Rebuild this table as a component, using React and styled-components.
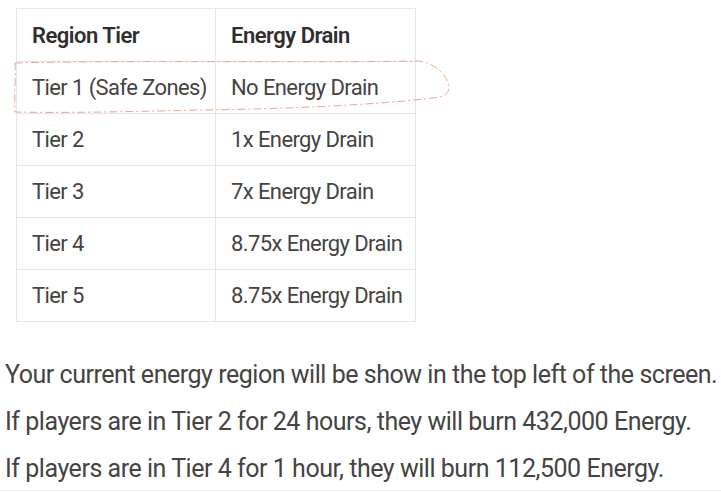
import React from "react";
import styled, { createGlobalStyle } from "styled-components";

const rows = [
  ["Tier 1 (Safe Zones)", "No Energy Drain"],
  ["Tier 2", "1x Energy Drain"],
  ["Tier 3", "7x Energy Drain"],
  ["Tier 4", "8.75x Energy Drain"],
  ["Tier 5", "8.75x Energy Drain"],
];

const notes = [
  "Your current energy region will be show in the top left of the screen.",
  "If players are in Tier 2 for 24 hours, they will burn 432,000 Energy.",
  "If players are in Tier 4 for 1 hour, they will burn 112,500 Energy.",
];

export default function App() {
  return (
    <Page>
      <GlobalStyle />
      <TableWrap>
        <Table>
          <colgroup>
            <col style={{ width: 199 }} />
            <col />
          </colgroup>
          <thead>
            <tr>
              <Head>Region Tier</Head>
              <Head>Energy Drain</Head>
            </tr>
          </thead>
          <tbody>
            {rows.map(([tier, drain]) => (
              <tr key={tier}>
                <Cell>{tier}</Cell>
                <Cell>{drain}</Cell>
              </tr>
            ))}
          </tbody>
        </Table>
        <Scribble viewBox="0 0 460 130" width="460" height="130">
          <path
            d="M15 63 C 120 60, 300 63, 418 61 C 432 62, 440 70, 446 78 C 450 86, 451 94, 440 97 C 400 103, 300 109, 200 110 C 120 112, 60 113, 15 112 C 14 95, 16 78, 15 63"
            fill="none"
            stroke="#e9a594"
            strokeWidth="1"
            strokeDasharray="8 3 2 3"
          />
        </Scribble>
      </TableWrap>
      <Notes>
        {notes.map((n) => (
          <Note key={n}>{n}</Note>
        ))}
      </Notes>
      <Rule />
    </Page>
  );
}

const GlobalStyle = createGlobalStyle`
  body {
    margin: 0;
    background: #fff;
    font-family: Roboto, "Open Sans", sans-serif;
  }
`;

const Page = styled.div`
  width: 721px;
  height: 493px;
  overflow: hidden;
  position: relative;
  display: flex;
  flex-direction: column;
`;

const TableWrap = styled.div`
  position: relative;
  padding: 8px 0 0 16px;
`;

const Table = styled.table`
  border-collapse: collapse;
  width: 400px;
  table-layout: fixed;
`;

const Head = styled.th`
  text-align: left;
  font-weight: 600;
  font-size: 22px;
  letter-spacing: -0.5px;
  color: #2f2f2f;
  height: 52px;
  padding: 0 0 0 15px;
  border: 1px solid #e6e6e6;
  white-space: nowrap;
`;

const Cell = styled.td`
  font-size: 22px;
  letter-spacing: -0.6px;
  color: #444;
  height: 51px;
  padding: 0 0 0 15px;
  border: 1px solid #e6e6e6;
  white-space: nowrap;
`;

const Scribble = styled.svg`
  position: absolute;
  left: 0;
  top: 0;
  pointer-events: none;
`;

const Notes = styled.div`
  margin-top: 36px;
  padding-left: 5px;
  display: flex;
  flex-direction: column;
  gap: 13px;
`;

const Note = styled.p`
  margin: 0;
  font-size: 25px;
  letter-spacing: -0.47px;
  line-height: 34px;
  color: #444;
  white-space: nowrap;
`;

const Rule = styled.div`
  position: absolute;
  left: 0;
  right: 0;
  bottom: 2px;
  border-top: 1px solid #ececec;
`;
